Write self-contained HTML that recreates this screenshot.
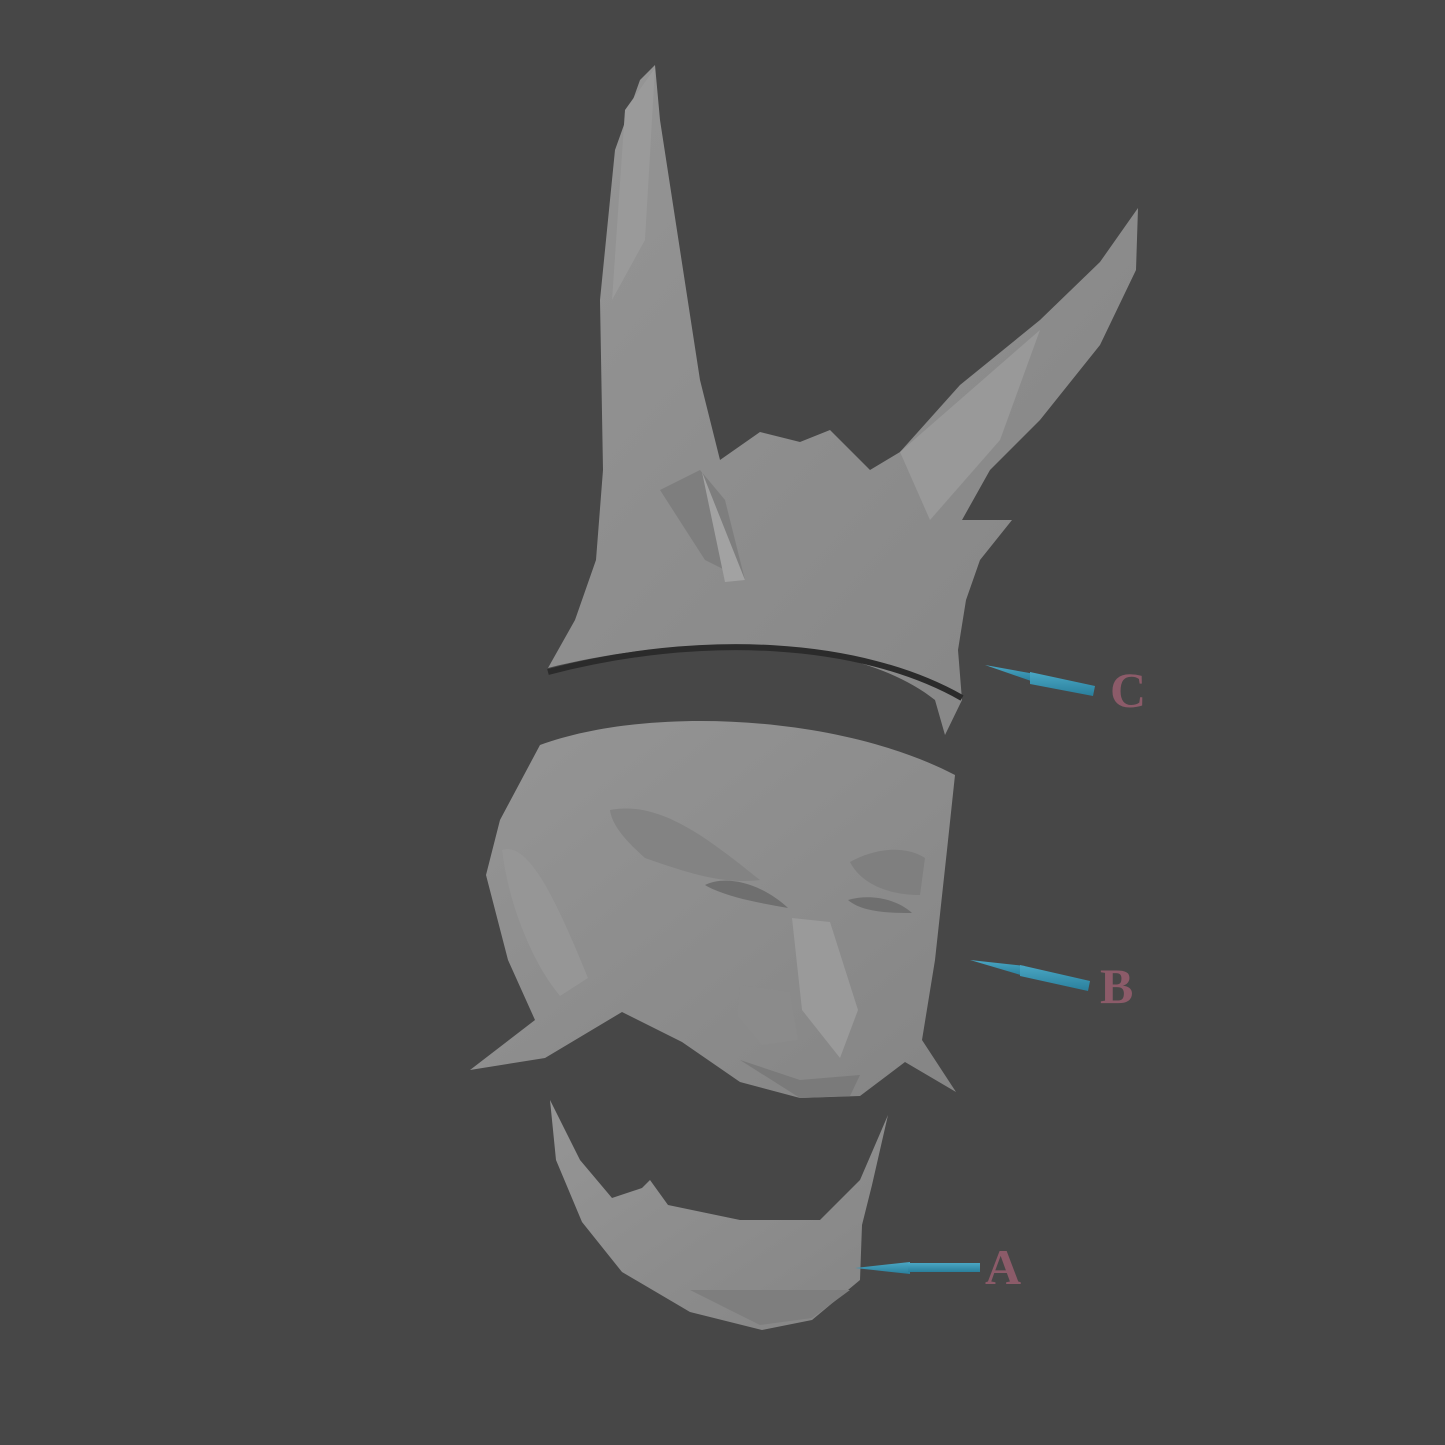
<!DOCTYPE html>
<html><head><meta charset="utf-8"><style>
html,body{margin:0;padding:0;background:#474747;width:1445px;height:1445px;overflow:hidden}
svg{display:block}
text{font-family:"Liberation Serif",serif;font-weight:bold;fill:#8c5b69;font-size:50px}
</style></head><body>
<svg width="1445" height="1445" viewBox="0 0 1445 1445">
<defs>
<linearGradient id="g1" x1="0" y1="0" x2="1" y2="1"><stop offset="0" stop-color="#959595"/><stop offset="1" stop-color="#858585"/></linearGradient>
<linearGradient id="ar" x1="0" y1="0" x2="0" y2="1"><stop offset="0" stop-color="#4aa7c4"/><stop offset="1" stop-color="#2a7f9c"/></linearGradient>
</defs>
<rect width="1445" height="1445" fill="#474747"/>
<!-- Helmet C -->
<path d="M548,668 L575,620 L596,560 L603,470 L600,300 L615,150 L640,80 L655,65 L660,120 L680,250 L700,380 L720,460 L760,432 L800,442 L830,430 L870,470 L900,452 L960,385 L1040,320 L1100,262 L1138,208 L1136,270 L1100,345 L1040,420 L990,470 L962,520 L1012,520 L980,560 L966,600 L958,650 L962,700 L945,735 L935,700 C860,640 700,630 548,668 Z" fill="url(#g1)"/>
<path d="M548,672 C700,632 860,640 962,698" fill="none" stroke="#2b2b2b" stroke-width="6"/>
<path d="M660,490 L700,470 L725,500 L745,580 L705,560 Z" fill="#7e7e7e"/>
<path d="M702,472 L745,580 L725,582 Z" fill="#a2a2a2"/>
<path d="M625,110 L655,68 L645,240 L612,300 Z" fill="#9a9a9a"/>
<path d="M900,452 L1040,330 L1000,440 L930,520 Z" fill="#999"/>
<!-- Face B -->
<path d="M540,745 C650,705 840,715 955,775 L947,850 L935,960 L922,1040 L956,1092 L905,1062 L860,1096 L800,1098 L740,1082 L682,1042 L622,1012 L545,1058 L470,1070 L535,1020 L508,960 L486,875 L500,820 Z" fill="url(#g1)"/>
<path d="M610,810 C660,800 710,840 760,880 C720,885 680,870 645,858 C625,840 612,825 610,810 Z" fill="#838383"/>
<path d="M850,862 C875,848 905,845 925,858 L920,895 C890,895 862,885 850,862 Z" fill="#7f7f7f"/>
<path d="M705,885 C725,875 760,882 788,908 C760,903 725,897 705,885 Z" fill="#6f6f6f"/>
<path d="M848,900 C872,893 898,900 912,913 C888,913 862,912 848,900 Z" fill="#6f6f6f"/>
<path d="M792,918 L830,922 L858,1010 L840,1058 L802,1010 Z" fill="#9a9a9a"/>
<path d="M740,985 L790,992 L798,1040 L762,1045 L737,1015 Z" fill="#8b8b8b"/>
<path d="M502,850 C530,840 560,910 588,978 L560,996 C530,960 508,900 502,850 Z" fill="#969696"/>
<path d="M740,1060 L800,1080 L860,1075 L850,1096 L800,1098 Z" fill="#7a7a7a"/>
<!-- Chin A -->
<path d="M550,1100 L580,1160 L612,1198 L642,1188 L650,1180 L668,1205 L740,1220 L820,1220 L860,1180 L888,1115 L872,1185 L862,1225 L860,1280 L812,1320 L762,1330 L690,1312 L622,1272 L582,1222 L556,1160 Z" fill="url(#g1)"/>
<path d="M690,1290 L760,1325 L812,1318 L850,1290 Z" fill="#7e7e7e"/>
<!-- Arrows -->
<g fill="url(#ar)">
<path d="M985,665 L1035,674 L1034,682 Z"/>
<path d="M1030,672 L1095,686 L1093,696 L1030,684 Z"/>
<path d="M970,960 L1025,966 L1024,976 Z"/>
<path d="M1020,965 L1090,981 L1088,991 L1020,976 Z"/>
<path d="M855,1268 L910,1262 L910,1274 Z"/>
<path d="M908,1263 L980,1263 L980,1272 L908,1272 Z"/>
</g>
<text x="1110" y="707">C</text>
<text x="1100" y="1003">B</text>
<text x="985" y="1284">A</text>
</svg>
</body></html>
